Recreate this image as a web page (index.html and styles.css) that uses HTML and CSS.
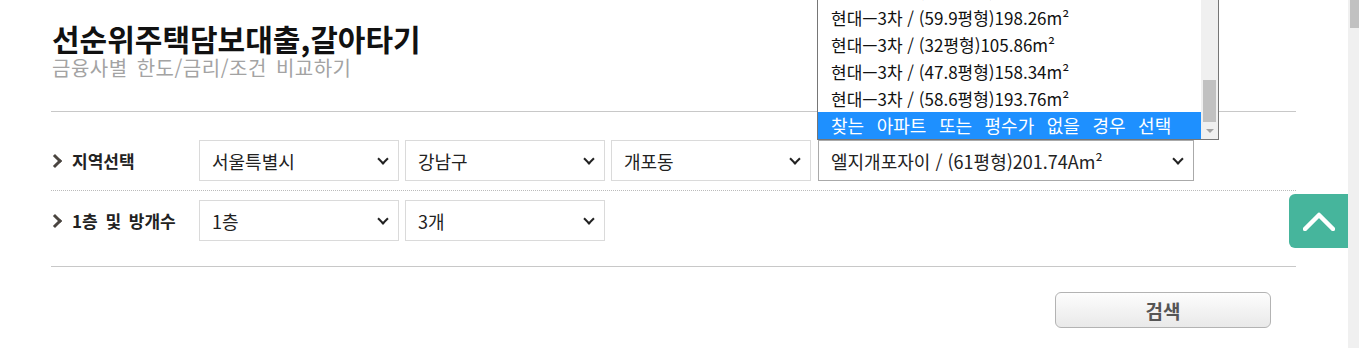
FILE: index.html
```html
<!DOCTYPE html>
<html lang="ko">
<head>
<meta charset="UTF-8">
<meta name="viewport" content="width=device-width, initial-scale=1.0">
<title>선순위주택담보대출,갈아타기</title>
<link rel="stylesheet" href="styles.css">
</head>
<body>
<div class="container">
    <div class="header">
        <h1>선순위주택담보대출,갈아타기</h1>
        <p class="sub">금융사별 한도/금리/조건 비교하기</p>
    </div>

    <div class="row">
        <div class="label"><span class="arrow"></span>지역선택</div>
        <div class="select">서울특별시<i class="chev"></i></div>
        <div class="select">강남구<i class="chev"></i></div>
        <div class="select">개포동<i class="chev"></i></div>
        <div class="select wide open">엘지개포자이 / (61평형)201.74Am²<i class="chev"></i>
            <div class="list">
                <div class="opt">현대—3차 / (44.7평형)147.82m²</div>
                <div class="opt">현대—3차 / (59.9평형)198.26m²</div>
                <div class="opt">현대—3차 / (32평형)105.86m²</div>
                <div class="opt">현대—3차 / (47.8평형)158.34m²</div>
                <div class="opt">현대—3차 / (58.6평형)193.76m²</div>
                <div class="opt sel">찾는 아파트 또는 평수가 없을 경우 선택</div>
                <div class="sbar"><div class="thumb"></div><div class="down"></div></div>
            </div>
        </div>
    </div>

    <div class="row last">
        <div class="label"><span class="arrow"></span>1층 및 방개수</div>
        <div class="select">1층<i class="chev"></i></div>
        <div class="select">3개<i class="chev"></i></div>
    </div>

    <div class="actions">
        <button class="btn">검색</button>
    </div>
</div>

<a class="totop" href="#"><svg width="32" height="20" viewBox="0 0 32 20"><polyline points="2,18 16,4 30,18" fill="none" stroke="#fff" stroke-width="4.5" stroke-linecap="round" stroke-linejoin="round"/></svg></a>
<div class="pagebar"><div class="pagethumb"></div></div>
</body>
</html>
```

FILE: styles.css
```css
body {
    font-family: "Noto Sans CJK KR", "Noto Sans", sans-serif;
    margin: 0;
    padding: 0;
    color: #111;
    background-color: #fff;
    overflow: hidden;
}
.container {
    width: 1245px;
    margin-left: 51px;
}
.header {
    padding: 19px 0 32px 1px;
    border-bottom: 1px solid #c8c8c8;
}
h1 {
    margin: 0;
    font-size: 30px;
    line-height: 38px;
    font-weight: bold;
}
.sub {
    margin: 0;
    font-size: 20px;
    line-height: 22px;
    letter-spacing: 0.5px;
    word-spacing: 3px;
    color: #a3a3a3;
}
.row {
    display: flex;
    align-items: center;
    padding: 28px 0 9px;
    border-bottom: 1px dotted #bbb;
}
.row.last {
    padding: 9px 0 25px;
    border-bottom: 1px solid #c8c8c8;
}
.label {
    width: 148px;
    display: flex;
    align-items: center;
    font-size: 17px;
    word-spacing: 3px;
    font-weight: bold;
    color: #222;
}
.arrow {
    width: 7px;
    height: 7px;
    border-top: 3px solid #4a4540;
    border-right: 3px solid #4a4540;
    transform: rotate(45deg);
    margin: 0 12px 0 -1px;
}
.select {
    position: relative;
    box-sizing: border-box;
    width: 200px;
    height: 41px;
    margin-right: 6px;
    padding: 0 9px 0 12px;
    border: 1px solid #dadada;
    display: flex;
    align-items: center;
    justify-content: space-between;
    font-size: 18px;
    color: #222;
    white-space: nowrap;
}
.select.wide {
    width: 376px;
    margin-left: 1px;
    border-color: #aaa;
}
.chev {
    width: 6px;
    height: 6px;
    border-right: 2px solid #222;
    border-bottom: 2px solid #222;
    transform: rotate(45deg);
    margin: -4px 2px 0 0;
}
.list {
    position: absolute;
    left: -2px;
    bottom: calc(100% + 1px);
    width: 402px;
    box-sizing: border-box;
    border: 1px solid #767676;
    background: #fff;
    padding-right: 17px;
}
.opt {
    height: 27px;
    line-height: 27px;
    padding-left: 13px;
    font-size: 17px;
    color: #111;
}
.opt.sel {
    background: #1e90ff;
    color: #fff;
    font-size: 18px;
    word-spacing: 7.5px;
}
.sbar {
    position: absolute;
    top: 0;
    right: 0;
    bottom: 0;
    width: 17px;
    background: #f0f0f0;
}
.thumb {
    position: absolute;
    left: 2px;
    right: 2px;
    bottom: 17px;
    height: 42px;
    background: #c1c1c1;
}
.down {
    position: absolute;
    left: 5px;
    bottom: 6px;
    border-left: 4px solid transparent;
    border-right: 4px solid transparent;
    border-top: 4px solid #a3a3a3;
}
.actions {
    display: flex;
    justify-content: flex-end;
    padding: 25px 25px 0 0;
}
.btn {
    width: 216px;
    height: 36px;
    border: 1px solid #b3b3b3;
    border-radius: 6px;
    background: linear-gradient(#fdfdfd, #e9e9e9);
    font-family: inherit;
    font-size: 19px;
    font-weight: bold;
    color: #555;
    outline: none;
}
.totop {
    position: fixed;
    top: 194px;
    right: 11px;
    width: 59px;
    height: 54px;
    border-radius: 6px 0 0 6px;
    background: #46b59c;
    display: flex;
    align-items: center;
    justify-content: center;
}
.pagebar {
    position: fixed;
    top: 0;
    right: 0;
    width: 11px;
    height: 100%;
    background: #f0f0f0;
}
.pagethumb {
    margin-left: 2px;
    height: 28px;
    background: #c1c1c1;
}
```
